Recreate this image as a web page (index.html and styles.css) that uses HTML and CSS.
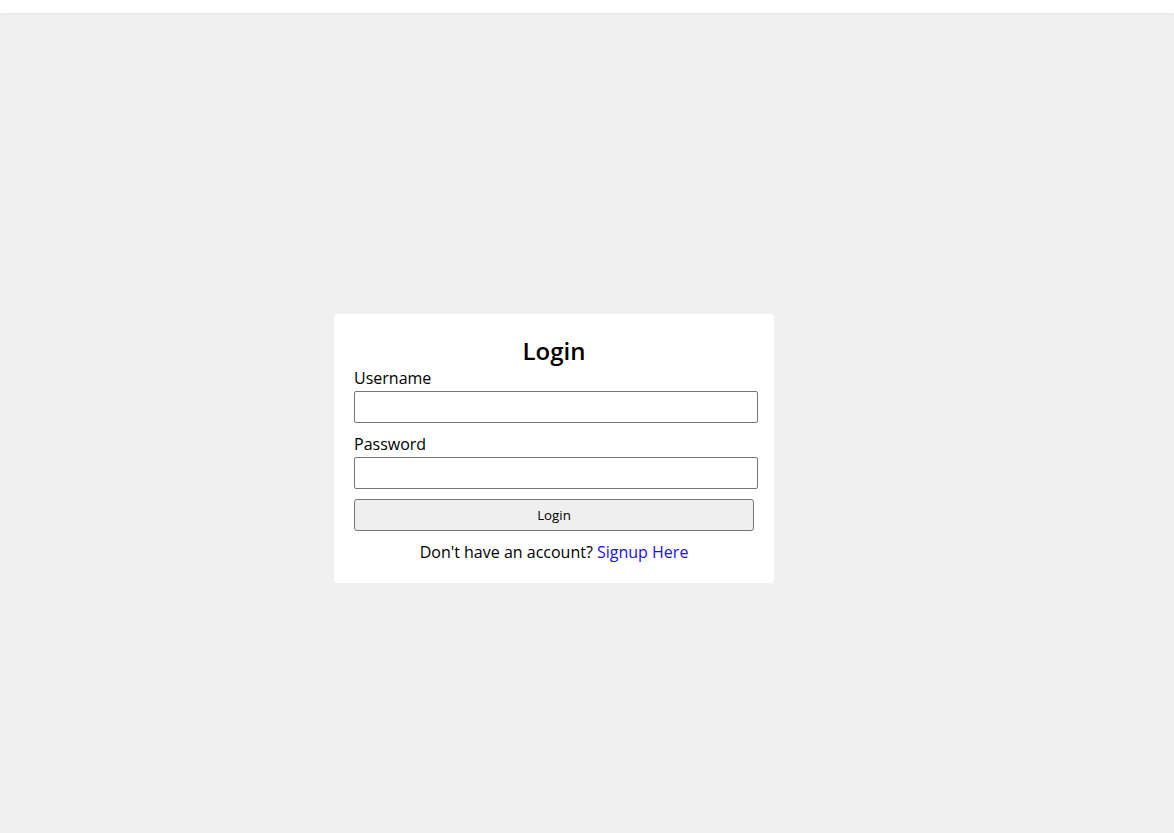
FILE: index.html
```html
<!DOCTYPE html>
<html lang="en">
<head>
<meta charset="utf-8">
<title>Login</title>
<link rel="stylesheet" href="styles.css">
</head>
<body>
<header class="topbar"></header>
<main class="page">
  <form class="card">
    <h2 class="title">Login</h2>
    <div class="field">
      <label class="label" for="username">Username</label>
      <input class="input" id="username" type="text">
    </div>
    <div class="field">
      <label class="label" for="password">Password</label>
      <input class="input" id="password" type="password">
    </div>
    <button class="btn" type="button">Login</button>
    <p class="footer">Don't have an account? <a class="link" href="#">Signup Here</a></p>
  </form>
</main>
</body>
</html>
```

FILE: styles.css
```css
html, body {
  margin: 0;
  padding: 0;
}
body {
  background: #f0f0f0;
  font-family: "Open Sans", "Liberation Sans", sans-serif;
  color: #000;
  min-height: 833px;
}
.topbar {
  height: 13px;
  background: #fff;
  box-shadow: 0 1px 3px rgba(0, 0, 0, 0.05);
}
.page {
  display: flex;
  padding-top: 301px;
  padding-left: 334px;
}
.card {
  width: 400px;
  padding: 20px;
  background: #fff;
  border-radius: 4px;
}
.title {
  margin: 0;
  text-align: center;
  font-size: 24px;
  font-weight: 600;
  line-height: 33px;
}
.field {
  margin-bottom: 10px;
}
.label {
  display: block;
  font-size: 16px;
  line-height: 22px;
}
.input {
  display: block;
  margin-top: 2px;
  width: 100%;
  height: 28px;
  padding: 1px;
  border: 1px solid #767676;
  border-radius: 2px;
  font-family: inherit;
  font-size: 13.33px;
  background: #fff;
}
.btn {
  display: block;
  width: 100%;
  height: 32px;
  box-sizing: border-box;
  background: #efefef;
  border: 1px solid #767676;
  border-radius: 3px;
  font-family: "Open Sans", "Liberation Sans", sans-serif;
  font-size: 13.33px;
  color: #000;
}
.footer {
  margin: 10px 0 0;
  text-align: center;
  font-size: 16px;
  line-height: 22px;
}
.link {
  color: #1a0dff;
  text-decoration: none;
}
```
